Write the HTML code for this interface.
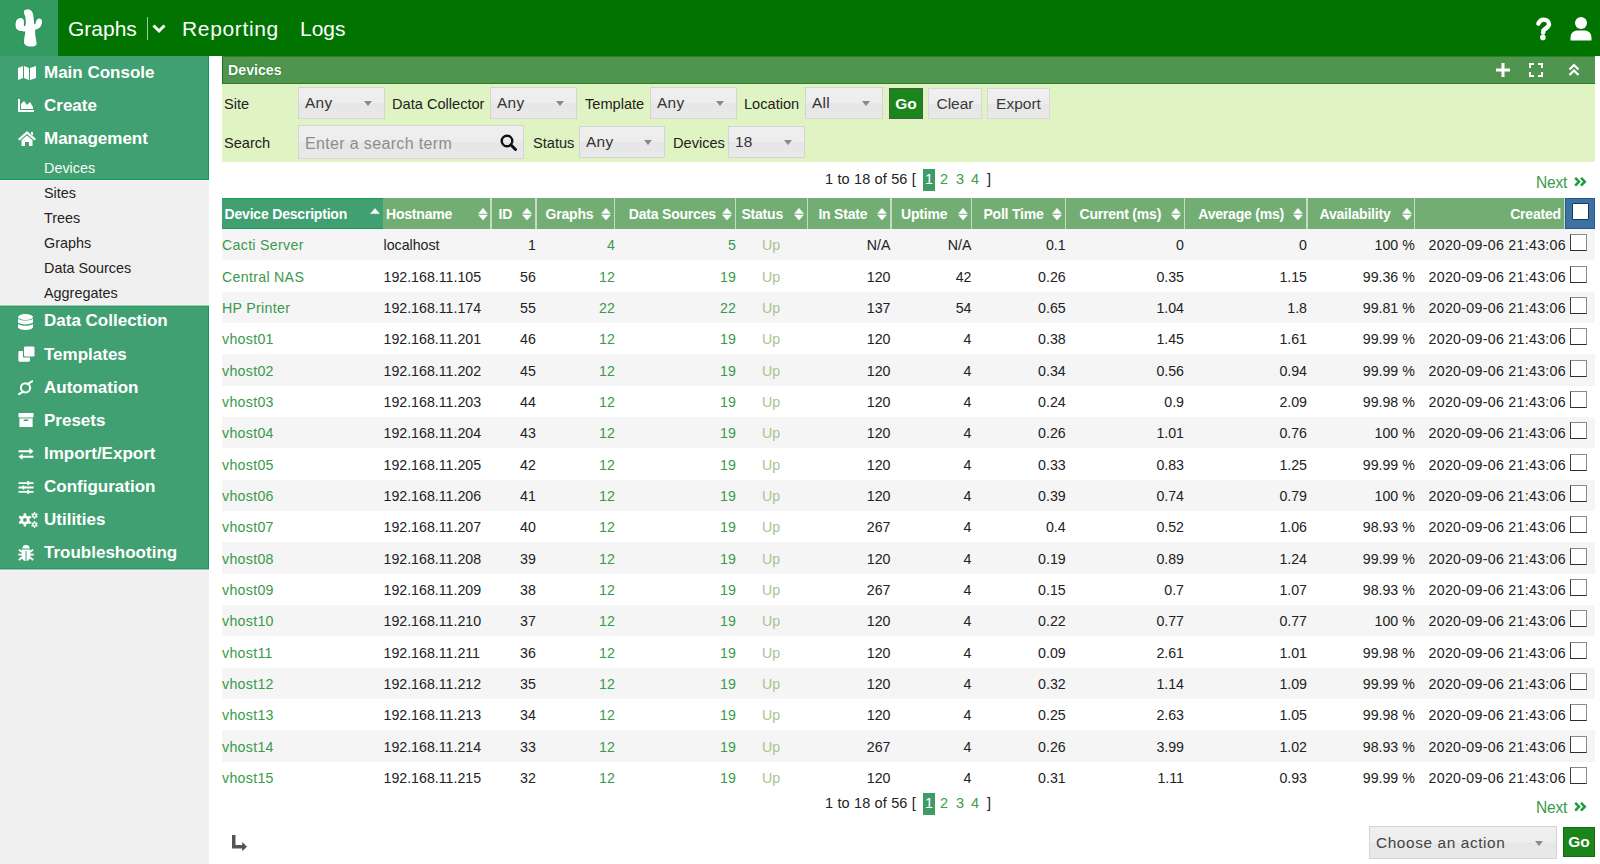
<!DOCTYPE html><html><head><meta charset="utf-8"><title>Devices</title><style>
*{box-sizing:border-box;margin:0;padding:0}
html,body{width:1600px;height:864px;overflow:hidden;background:#fff;font-family:"Liberation Sans",sans-serif;color:#222222}
.a{position:absolute;white-space:nowrap}
#top{left:0;top:0;width:1600px;height:56px;background:#007300}
#logo{left:0;top:0;width:58px;height:56px;background:#339a60}
.nav{color:#fff;font-size:21px;top:16px;line-height:26px}
#side1{left:0;top:56px;width:209px;height:124px;background:#41a072;border-bottom:1px solid #11995a}
#sideg{left:0;top:180px;width:209px;height:684px;background:#f0f0f0}
#side2{left:0;top:305px;width:209px;height:265px;background:#41a072}
.sb{color:#fff;font-weight:bold;font-size:17px;line-height:20px;left:44px}
.ss{font-size:14.4px;line-height:18px;left:44px;color:#262222}
.ic{left:18px}
#hdr{left:222px;top:56px;width:1373px;height:28px;background:#4f954f;border-left:1px solid #127812;border-bottom:1px solid #2b7f2b}
#filt{left:222px;top:84px;width:1373px;height:78px;background:#e0f3c3}
.lbl{font-size:14.6px;line-height:18px;color:#222}
.sel{height:32px;border:1px solid #d3d3d8;background:linear-gradient(#efefef 0,#ededed 50%,#e6e6e6 52%,#e9e9e9 100%);font-size:15.4px;letter-spacing:0.3px;color:#333;line-height:30px;padding-left:6px}
.tri{position:absolute;width:0;height:0;border-left:4.5px solid transparent;border-right:4.5px solid transparent;border-top:5px solid #8a8a8a;top:13px}
.btn{height:31px;border:1px solid #d8d8dc;background:linear-gradient(#f0f0f0 0,#ededed 50%,#e6e6e6 52%,#eaeaea 100%);font-size:15.5px;color:#3a3a3a;line-height:29px;text-align:center}
#th{left:222px;top:198px;width:1373px;height:31px;background:#72ad73}
.thc{color:#fff;font-weight:bold;font-size:14px;letter-spacing:-0.2px;line-height:31px;top:199px}
.sep{top:198px;width:1.6px;height:31px;background:#cbd8c7}
.row{left:222px;width:1373px}
.td{font-size:14.2px;line-height:18px}
.cb{width:17px;height:17px;border:1px solid #8a8a8a;border-bottom-color:#2e2e2e;border-left-color:#3a3a3a;background:#fff}
.lnk{color:#3a9a4c}
.up{color:#a8c38f}
.pg{font-size:14.5px;line-height:20px;letter-spacing:0.15px;padding-bottom:2px}
.pgb{background:#3f9c68;color:#fff;text-align:center}
.pgn{color:#3aa04a}
.next{font-size:15px;color:#3a9a4c;line-height:18px}
</style></head><body>
<div id="top" class="a"></div><div id="logo" class="a"></div>
<svg class="a" style="left:0;top:0" width="58" height="56" viewBox="0 0 58 56"><path fill="#fff" stroke="#12904a" stroke-width="1" paint-order="stroke" d="M23.8 12.5 C23.5 10 26 9 28 9.2 C31 9.4 32.8 11.5 33.3 15 L34.2 23.5 C34.5 24.5 35.2 24.5 35.5 23.5 C36 20 37.5 18.5 39.5 18.6 C41.8 18.8 42.4 21 42 23 C41.5 26.5 39 29 35.2 29.8 C35 33 35.5 37 36.6 42.5 C37 45.5 35 46.6 31.5 46.6 C27 46.6 24.5 45.5 24 42.5 C23.8 39 25 35 25.2 31.5 C21 31.5 17 31 15.8 27.5 C15 24.5 15.6 20.5 17.6 19 C19.5 17.5 22.5 17.8 23.6 19.8 C24.2 21.5 23.8 24 24 25.5 C24.3 26.5 25.5 26 25.6 24.5 C25.8 21 25.8 18 25 16 C24.5 14.5 23.9 13.5 23.8 12.5Z"/></svg>
<div class="a nav" style="left:68px">Graphs</div>
<div class="a" style="left:147px;top:17px;width:1px;height:23px;background:#9fc79f"></div>
<svg class="a" style="left:152px;top:24px" width="14" height="10" viewBox="0 0 14 10"><path d="M1.5 1.5 L7 7 L12.5 1.5" stroke="#fff" stroke-width="3" fill="none"/></svg>
<div class="a nav" style="left:182px;letter-spacing:0.65px">Reporting</div>
<div class="a nav" style="left:300px">Logs</div>
<svg class="a" style="left:1534px;top:16px" width="19" height="26" viewBox="0 0 19 26"><path d="M4.3 7.6 C5.5 5 7.2 3.6 9.6 3.6 C12.9 3.6 15 5.4 15 8.2 C15 11.4 11.2 12.2 9.4 14.6 L9.2 16.6" stroke="#fff" stroke-width="4.4" fill="none" stroke-linecap="round"/><circle cx="8.9" cy="21.4" r="2.8" fill="#fff"/></svg>
<svg class="a" style="left:1570px;top:17px" width="22" height="24" viewBox="0 0 22 24"><circle cx="11" cy="6" r="6" fill="#fff"/><path d="M0.5 21 C0.5 15.5 4 13.6 7.5 13.6 L14.5 13.6 C18 13.6 21.5 15.5 21.5 21 L21.5 23.5 L0.5 23.5Z" fill="#fff"/></svg>
<div id="sideg" class="a"></div><div id="side1" class="a"></div><div id="side2" class="a"></div>
<div class="a" style="left:0;top:180px;width:209px;height:1px;background:#f8f2f5"></div>
<div class="a" style="left:0;top:304px;width:209px;height:1px;background:#f8f2f5"></div>
<div class="a" style="left:0;top:305px;width:209px;height:1px;background:#9ccab0"></div>
<div class="a" style="left:0;top:306px;width:209px;height:1px;background:#2e9c68"></div>
<div class="a" style="left:0;top:568px;width:209px;height:1px;background:#259a64"></div>
<div class="a" style="left:0;top:569px;width:209px;height:1px;background:#9cc8b0"></div>
<div class="a" style="left:0;top:570px;width:209px;height:1px;background:#f8f2f5"></div>
<div class="a" style="left:208px;top:56px;width:1px;height:124px;background:#11995a"></div><div class="a" style="left:208px;top:306px;width:1px;height:263px;background:#11995a"></div>
<div class="a sb" style="top:63px">Main Console</div>
<div class="a sb" style="top:95.6px">Create</div>
<div class="a sb" style="top:129px">Management</div>
<div class="a ss" style="top:159px;color:#f6fbf6">Devices</div>
<div class="a ss" style="top:184px">Sites</div>
<div class="a ss" style="top:209px">Trees</div>
<div class="a ss" style="top:234px">Graphs</div>
<div class="a ss" style="top:259px">Data Sources</div>
<div class="a ss" style="top:284px">Aggregates</div>
<div class="a sb" style="top:311px">Data Collection</div>
<div class="a sb" style="top:345px">Templates</div>
<div class="a sb" style="top:378px">Automation</div>
<div class="a sb" style="top:411px">Presets</div>
<div class="a sb" style="top:444px">Import/Export</div>
<div class="a sb" style="top:477px">Configuration</div>
<div class="a sb" style="top:510px">Utilities</div>
<div class="a sb" style="top:543px">Troubleshooting</div>
<svg class="a" style="left:18px;top:66px" width="18" height="14" viewBox="0 0 18 14"><path fill="#fff" d="M0 2 L5 0 L5 12 L0 14Z M6 0 L11 2 L11 14 L6 12Z M12 2 L18 0 L18 12 L12 14Z"/></svg>
<svg class="a" style="left:18px;top:99px" width="16" height="13" viewBox="0 0 16 13"><path fill="#fff" d="M0 0 H2 V11 H16 V13 H0Z M3 10 V5 L6 2 L9 6 L12 3 L15 8 V10Z"/></svg>
<svg class="a" style="left:18px;top:131px" width="18" height="15" viewBox="0 0 18 15"><path fill="#fff" d="M9 0 L18 8 L16.5 9.5 L9 3 L1.5 9.5 L0 8Z M3.5 9 L9 4.5 L14.5 9 V15 H11 V11 H7 V15 H3.5Z M13 1 H15 V4.5 L13 3Z"/></svg>
<svg class="a" style="left:18px;top:314px" width="15" height="16" viewBox="0 0 15 16"><ellipse cx="7.5" cy="3" rx="7.5" ry="3" fill="#fff"/><path fill="#fff" d="M0 4.8 C2.5 7.2 12.5 7.2 15 4.8 V8.6 C12.5 11 2.5 11 0 8.6Z M0 10 C2.5 12.4 12.5 12.4 15 10 V13 C15 15 11 16 7.5 16 C4 16 0 15 0 13Z"/></svg>
<svg class="a" style="left:18px;top:346px" width="17" height="16" viewBox="0 0 17 16"><rect x="6" y="0.6" width="10.5" height="10" rx="1.4" fill="#fff"/><path fill="#fff" d="M1.5 5 H5 V11.6 H12 V14.6 C12 15.3 11.5 15.8 10.8 15.8 H1.5 C0.8 15.8 0.4 15.3 0.4 14.6 V6.2 C0.4 5.5 0.8 5 1.5 5Z"/></svg>
<svg class="a" style="left:18px;top:380px" width="15" height="15" viewBox="0 0 15 15"><circle cx="7.5" cy="7.8" r="4.6" stroke="#fff" stroke-width="2" fill="none"/><path d="M14.5 1.2 L9.5 4.2 M0.8 14.2 L5.5 11.6" stroke="#fff" stroke-width="2" stroke-linecap="round"/></svg>
<svg class="a" style="left:18px;top:413px" width="16" height="14" viewBox="0 0 16 14"><rect x="0.4" y="0" width="15.2" height="4.4" rx="0.8" fill="#fff"/><rect x="1.4" y="5.4" width="13.2" height="8.6" fill="#fff"/><rect x="5.6" y="6.6" width="4.8" height="1.4" rx="0.6" fill="#41a072"/></svg>
<svg class="a" style="left:18px;top:448px" width="16" height="12" viewBox="0 0 16 12"><path fill="#fff" d="M0.5 2.3 H11.5 V0 L15.5 3.3 L11.5 6.6 V4.3 H0.5Z M15.5 7.7 H4.5 V5.4 L0.5 8.7 L4.5 12 V9.7 H15.5Z"/></svg>
<svg class="a" style="left:18px;top:481px" width="16" height="13" viewBox="0 0 16 13"><path fill="#fff" d="M0.5 1.2 H15.5 V3 H0.5Z M0.5 5.6 H15.5 V7.4 H0.5Z M0.5 10 H15.5 V11.8 H0.5Z M9.4 0 H11.2 V4.2 H9.4Z M4.6 4.4 H6.4 V8.6 H4.6Z M9.4 8.8 H11.2 V13 H9.4Z"/></svg>
<svg class="a" style="left:18px;top:511.5px" width="21" height="17" viewBox="0 0 21 17"><circle cx="6.9" cy="7.9" r="4.6" fill="#fff"/><rect x="5.65" y="1.30" width="2.50" height="3.00" fill="#fff" transform="rotate(0.0 6.9 7.9)"/><rect x="5.65" y="1.30" width="2.50" height="3.00" fill="#fff" transform="rotate(60.0 6.9 7.9)"/><rect x="5.65" y="1.30" width="2.50" height="3.00" fill="#fff" transform="rotate(120.0 6.9 7.9)"/><rect x="5.65" y="1.30" width="2.50" height="3.00" fill="#fff" transform="rotate(180.0 6.9 7.9)"/><rect x="5.65" y="1.30" width="2.50" height="3.00" fill="#fff" transform="rotate(240.0 6.9 7.9)"/><rect x="5.65" y="1.30" width="2.50" height="3.00" fill="#fff" transform="rotate(300.0 6.9 7.9)"/><circle cx="6.9" cy="7.9" r="1.9" fill="#41a072"/><circle cx="16.5" cy="3.5" r="2.3" fill="#fff"/><rect x="15.80" y="0.08" width="1.40" height="1.68" fill="#fff" transform="rotate(0.0 16.5 3.5)"/><rect x="15.80" y="0.08" width="1.40" height="1.68" fill="#fff" transform="rotate(60.0 16.5 3.5)"/><rect x="15.80" y="0.08" width="1.40" height="1.68" fill="#fff" transform="rotate(120.0 16.5 3.5)"/><rect x="15.80" y="0.08" width="1.40" height="1.68" fill="#fff" transform="rotate(180.0 16.5 3.5)"/><rect x="15.80" y="0.08" width="1.40" height="1.68" fill="#fff" transform="rotate(240.0 16.5 3.5)"/><rect x="15.80" y="0.08" width="1.40" height="1.68" fill="#fff" transform="rotate(300.0 16.5 3.5)"/><circle cx="16.5" cy="3.5" r="1.0" fill="#41a072"/><circle cx="16.5" cy="12.5" r="2.3" fill="#fff"/><rect x="15.80" y="9.08" width="1.40" height="1.68" fill="#fff" transform="rotate(0.0 16.5 12.5)"/><rect x="15.80" y="9.08" width="1.40" height="1.68" fill="#fff" transform="rotate(60.0 16.5 12.5)"/><rect x="15.80" y="9.08" width="1.40" height="1.68" fill="#fff" transform="rotate(120.0 16.5 12.5)"/><rect x="15.80" y="9.08" width="1.40" height="1.68" fill="#fff" transform="rotate(180.0 16.5 12.5)"/><rect x="15.80" y="9.08" width="1.40" height="1.68" fill="#fff" transform="rotate(240.0 16.5 12.5)"/><rect x="15.80" y="9.08" width="1.40" height="1.68" fill="#fff" transform="rotate(300.0 16.5 12.5)"/><circle cx="16.5" cy="12.5" r="1.0" fill="#41a072"/></svg>
<svg class="a" style="left:18px;top:545px" width="16" height="16" viewBox="0 0 16 16"><path fill="#fff" d="M4.4 3.4 A3.6 3.4 0 0 1 11.6 3.4Z M3.6 4.4 H12.4 V11 C12.4 14 10.6 16 8 16 C5.4 16 3.6 14 3.6 11Z"/><rect x="7.5" y="6" width="1" height="10" fill="#41a072"/><path d="M0.9 4.6 L3.8 7 M15.1 4.6 L12.2 7 M0.2 9.6 H3.8 M15.8 9.6 H12.2 M0.9 15 L3.9 12.4 M15.1 15 L12.1 12.4" stroke="#fff" stroke-width="1.8"/></svg>
<div id="hdr" class="a"></div>
<div class="a" style="left:222px;top:56px;width:1373px;height:1px;background:#2a832a"></div>
<div class="a" style="left:228px;top:60px;color:#fff;font-weight:bold;font-size:14.2px;line-height:20px;text-shadow:0 0 1.5px #1a6a1a">Devices</div>
<svg class="a" style="left:1496px;top:63px" width="14" height="14" viewBox="0 0 14 14"><path d="M7 0 V14 M0 7 H14" stroke="#fff" stroke-width="3"/></svg>
<svg class="a" style="left:1529px;top:63px" width="14" height="14" viewBox="0 0 14 14"><path d="M1 5 V1 H5 M9 1 H13 V5 M13 9 V13 H9 M5 13 H1 V9" stroke="#fff" stroke-width="2" fill="none"/></svg>
<svg class="a" style="left:1568px;top:63px" width="12" height="14" viewBox="0 0 12 14"><path d="M1.5 6.5 L6 2 L10.5 6.5 M1.5 12 L6 7.5 L10.5 12" stroke="#fff" stroke-width="2.2" fill="none"/></svg>
<div id="filt" class="a"></div>
<div class="a lbl" style="left:224px;top:95px">Site</div>
<div class="a sel" style="left:298px;top:87px;width:87px">Any<span class="tri" style="left:65px"></span></div>
<div class="a lbl" style="left:392px;top:95px">Data Collector</div>
<div class="a sel" style="left:490px;top:87px;width:87px">Any<span class="tri" style="left:65px"></span></div>
<div class="a lbl" style="left:585px;top:95px">Template</div>
<div class="a sel" style="left:650px;top:87px;width:87px">Any<span class="tri" style="left:65px"></span></div>
<div class="a lbl" style="left:744px;top:95px">Location</div>
<div class="a sel" style="left:805px;top:87px;width:78px">All<span class="tri" style="left:56px"></span></div>
<div class="a" style="left:889px;top:88px;width:34px;height:31px;background:#1a861a;border:1px solid #4a5a4a;color:#fff;font-weight:bold;font-size:15.5px;line-height:29px;text-align:center">Go</div>
<div class="a btn" style="left:928px;top:88px;width:54px">Clear</div>
<div class="a btn" style="left:987px;top:88px;width:63px">Export</div>
<div class="a lbl" style="left:224px;top:134px">Search</div>
<div class="a sel" style="left:298px;top:125px;width:226px;height:34px;color:#8d8d8d;line-height:35px;font-size:16px;letter-spacing:0.35px">Enter a search term</div>
<svg class="a" style="left:500px;top:134px" width="17" height="17" viewBox="0 0 17 17"><circle cx="7" cy="7" r="5.3" stroke="#111" stroke-width="2.4" fill="none"/><path d="M10.8 10.8 L15.5 15.5" stroke="#111" stroke-width="3" stroke-linecap="round"/></svg>
<div class="a lbl" style="left:533px;top:134px">Status</div>
<div class="a sel" style="left:579px;top:126px;width:86px">Any<span class="tri" style="left:64px"></span></div>
<div class="a lbl" style="left:673px;top:134px">Devices</div>
<div class="a sel" style="left:728px;top:126px;width:77px">18<span class="tri" style="left:55px"></span></div>
<div class="a pg" style="left:825px;top:169px">1 to 18 of 56 [</div><div class="a pg pgb" style="left:923px;top:169px;width:12px">1</div><div class="a pg pgn" style="left:940px;top:169px">2</div><div class="a pg pgn" style="left:956px;top:169px">3</div><div class="a pg pgn" style="left:971px;top:169px">4</div><div class="a pg" style="left:987px;top:169px">]</div>
<div class="a pg" style="left:825px;top:793px">1 to 18 of 56 [</div><div class="a pg pgb" style="left:923px;top:793px;width:12px">1</div><div class="a pg pgn" style="left:940px;top:793px">2</div><div class="a pg pgn" style="left:956px;top:793px">3</div><div class="a pg pgn" style="left:971px;top:793px">4</div><div class="a pg" style="left:987px;top:793px">]</div>
<div class="a next" style="left:1536px;top:173.5px;font-size:15.6px;letter-spacing:-0.25px">Next</div><svg class="a" style="left:1574px;top:177px" width="13" height="10" viewBox="0 0 13 10"><path d="M1.2 0.8 L5 4.7 L1.2 8.6 M7 0.8 L10.8 4.7 L7 8.6" stroke="#17a03a" stroke-width="2.5" fill="none"/></svg>
<div class="a next" style="left:1536px;top:798.5px;font-size:15.6px;letter-spacing:-0.25px">Next</div><svg class="a" style="left:1574px;top:802px" width="13" height="10" viewBox="0 0 13 10"><path d="M1.2 0.8 L5 4.7 L1.2 8.6 M7 0.8 L10.8 4.7 L7 8.6" stroke="#17a03a" stroke-width="2.5" fill="none"/></svg>
<div id="th" class="a"></div>
<div class="a" style="left:222px;top:198px;width:161px;height:31px;background:#40a072"></div>
<div class="a" style="left:1565px;top:198px;width:30px;height:31px;background:#3e71a0;border:1px solid #1d5d94"></div>
<div class="a sep" style="left:1563.8px"></div>
<div class="a" style="left:1572px;top:203px;width:17px;height:17px;background:#fff;border:1.5px solid #0f3b63;border-radius:1px"></div>
<div class="a sep" style="left:490.0px"></div>
<div class="a sep" style="left:535.3px"></div>
<div class="a sep" style="left:613.6px"></div>
<div class="a sep" style="left:734.8px"></div>
<div class="a sep" style="left:806.5px"></div>
<div class="a sep" style="left:890.1px"></div>
<div class="a sep" style="left:970.5px"></div>
<div class="a sep" style="left:1064.8px"></div>
<div class="a sep" style="left:1183.6px"></div>
<div class="a sep" style="left:1306.0px"></div>
<div class="a sep" style="left:1413.9px"></div>
<div class="a thc" style="left:224.6px">Device Description</div>
<div class="a thc" style="left:386px">Hostname</div>
<svg class="a" style="left:478.1px;top:207.6px" width="10" height="13" viewBox="0 0 10 13"><path d="M5 0.3 L9.4 5.4 L0.6 5.4Z M0.6 7.0 L9.4 7.0 L5 12.1Z" fill="#fff" stroke="#fff" stroke-width="0.5" stroke-linejoin="round"/></svg>
<div class="a thc" style="left:498.6px">ID</div>
<svg class="a" style="left:522.0px;top:207.6px" width="10" height="13" viewBox="0 0 10 13"><path d="M5 0.3 L9.4 5.4 L0.6 5.4Z M0.6 7.0 L9.4 7.0 L5 12.1Z" fill="#fff" stroke="#fff" stroke-width="0.5" stroke-linejoin="round"/></svg>
<div class="a thc" style="left:545.6px">Graphs</div>
<svg class="a" style="left:600.7px;top:207.6px" width="10" height="13" viewBox="0 0 10 13"><path d="M5 0.3 L9.4 5.4 L0.6 5.4Z M0.6 7.0 L9.4 7.0 L5 12.1Z" fill="#fff" stroke="#fff" stroke-width="0.5" stroke-linejoin="round"/></svg>
<div class="a thc" style="left:628.8px">Data Sources</div>
<svg class="a" style="left:722.1px;top:207.6px" width="10" height="13" viewBox="0 0 10 13"><path d="M5 0.3 L9.4 5.4 L0.6 5.4Z M0.6 7.0 L9.4 7.0 L5 12.1Z" fill="#fff" stroke="#fff" stroke-width="0.5" stroke-linejoin="round"/></svg>
<div class="a thc" style="left:741.4px">Status</div>
<svg class="a" style="left:794.3px;top:207.6px" width="10" height="13" viewBox="0 0 10 13"><path d="M5 0.3 L9.4 5.4 L0.6 5.4Z M0.6 7.0 L9.4 7.0 L5 12.1Z" fill="#fff" stroke="#fff" stroke-width="0.5" stroke-linejoin="round"/></svg>
<div class="a thc" style="left:818.4px">In State</div>
<svg class="a" style="left:876.8px;top:207.6px" width="10" height="13" viewBox="0 0 10 13"><path d="M5 0.3 L9.4 5.4 L0.6 5.4Z M0.6 7.0 L9.4 7.0 L5 12.1Z" fill="#fff" stroke="#fff" stroke-width="0.5" stroke-linejoin="round"/></svg>
<div class="a thc" style="left:901px">Uptime</div>
<svg class="a" style="left:957.9px;top:207.6px" width="10" height="13" viewBox="0 0 10 13"><path d="M5 0.3 L9.4 5.4 L0.6 5.4Z M0.6 7.0 L9.4 7.0 L5 12.1Z" fill="#fff" stroke="#fff" stroke-width="0.5" stroke-linejoin="round"/></svg>
<div class="a thc" style="left:983.4px">Poll Time</div>
<svg class="a" style="left:1052.3px;top:207.6px" width="10" height="13" viewBox="0 0 10 13"><path d="M5 0.3 L9.4 5.4 L0.6 5.4Z M0.6 7.0 L9.4 7.0 L5 12.1Z" fill="#fff" stroke="#fff" stroke-width="0.5" stroke-linejoin="round"/></svg>
<div class="a thc" style="left:1079.5px">Current (ms)</div>
<svg class="a" style="left:1170.7px;top:207.6px" width="10" height="13" viewBox="0 0 10 13"><path d="M5 0.3 L9.4 5.4 L0.6 5.4Z M0.6 7.0 L9.4 7.0 L5 12.1Z" fill="#fff" stroke="#fff" stroke-width="0.5" stroke-linejoin="round"/></svg>
<div class="a thc" style="left:1198.3px">Average (ms)</div>
<svg class="a" style="left:1293.3px;top:207.6px" width="10" height="13" viewBox="0 0 10 13"><path d="M5 0.3 L9.4 5.4 L0.6 5.4Z M0.6 7.0 L9.4 7.0 L5 12.1Z" fill="#fff" stroke="#fff" stroke-width="0.5" stroke-linejoin="round"/></svg>
<div class="a thc" style="left:1319.5px">Availability</div>
<svg class="a" style="left:1401.5px;top:207.6px" width="10" height="13" viewBox="0 0 10 13"><path d="M5 0.3 L9.4 5.4 L0.6 5.4Z M0.6 7.0 L9.4 7.0 L5 12.1Z" fill="#fff" stroke="#fff" stroke-width="0.5" stroke-linejoin="round"/></svg>
<div class="a thc" style="left:1510.2px">Created</div>
<svg class="a" style="left:370.0px;top:207.5px" width="10" height="7" viewBox="0 0 10 7"><path d="M5 0.5 L9.4 5.6 L0.6 5.6Z" fill="#fff" stroke="#fff" stroke-width="0.5" stroke-linejoin="round"/></svg>
<div class="a" style="left:222px;top:198px;width:161px;height:1px;background:#16995a"></div><div class="a" style="left:222px;top:228px;width:161px;height:1px;background:#16995a"></div>
<div class="a" style="left:222px;top:229.00px;width:1373px;height:31px;background:#f5f5f5"></div>
<div class="a td lnk" style="left:222px;top:236.30px;letter-spacing:0.3px">Cacti Server</div>
<div class="a td" style="left:383.5px;top:236.30px">localhost</div>
<div class="a td " style="right:1064.2px;top:236.30px;text-align:right">1</div>
<div class="a td lnk" style="right:985.2px;top:236.30px;text-align:right">4</div>
<div class="a td lnk" style="right:864.2px;top:236.30px;text-align:right">5</div>
<div class="a td up" style="left:762px;top:236.30px">Up</div>
<div class="a td " style="right:709.5px;top:236.30px;text-align:right">N/A</div>
<div class="a td " style="right:628.5px;top:236.30px;text-align:right">N/A</div>
<div class="a td " style="right:534.3px;top:236.30px;text-align:right">0.1</div>
<div class="a td " style="right:416px;top:236.30px;text-align:right">0</div>
<div class="a td " style="right:293px;top:236.30px;text-align:right">0</div>
<div class="a td " style="right:185.20000000000005px;top:236.30px;text-align:right">100 %</div>
<div class="a td" style="left:1428.5px;top:236.30px;letter-spacing:0.3px">2020-09-06 21:43:06</div>
<div class="a cb" style="left:1570px;top:234.30px"></div>
<div class="a td lnk" style="left:222px;top:267.63px;letter-spacing:0.3px">Central NAS</div>
<div class="a td" style="left:383.5px;top:267.63px">192.168.11.105</div>
<div class="a td " style="right:1064.2px;top:267.63px;text-align:right">56</div>
<div class="a td lnk" style="right:985.2px;top:267.63px;text-align:right">12</div>
<div class="a td lnk" style="right:864.2px;top:267.63px;text-align:right">19</div>
<div class="a td up" style="left:762px;top:267.63px">Up</div>
<div class="a td " style="right:709.5px;top:267.63px;text-align:right">120</div>
<div class="a td " style="right:628.5px;top:267.63px;text-align:right">42</div>
<div class="a td " style="right:534.3px;top:267.63px;text-align:right">0.26</div>
<div class="a td " style="right:416px;top:267.63px;text-align:right">0.35</div>
<div class="a td " style="right:293px;top:267.63px;text-align:right">1.15</div>
<div class="a td " style="right:185.20000000000005px;top:267.63px;text-align:right">99.36 %</div>
<div class="a td" style="left:1428.5px;top:267.63px;letter-spacing:0.3px">2020-09-06 21:43:06</div>
<div class="a cb" style="left:1570px;top:265.63px"></div>
<div class="a" style="left:222px;top:292.00px;width:1373px;height:31px;background:#f5f5f5"></div>
<div class="a td lnk" style="left:222px;top:298.97px;letter-spacing:0.3px">HP Printer</div>
<div class="a td" style="left:383.5px;top:298.97px">192.168.11.174</div>
<div class="a td " style="right:1064.2px;top:298.97px;text-align:right">55</div>
<div class="a td lnk" style="right:985.2px;top:298.97px;text-align:right">22</div>
<div class="a td lnk" style="right:864.2px;top:298.97px;text-align:right">22</div>
<div class="a td up" style="left:762px;top:298.97px">Up</div>
<div class="a td " style="right:709.5px;top:298.97px;text-align:right">137</div>
<div class="a td " style="right:628.5px;top:298.97px;text-align:right">54</div>
<div class="a td " style="right:534.3px;top:298.97px;text-align:right">0.65</div>
<div class="a td " style="right:416px;top:298.97px;text-align:right">1.04</div>
<div class="a td " style="right:293px;top:298.97px;text-align:right">1.8</div>
<div class="a td " style="right:185.20000000000005px;top:298.97px;text-align:right">99.81 %</div>
<div class="a td" style="left:1428.5px;top:298.97px;letter-spacing:0.3px">2020-09-06 21:43:06</div>
<div class="a cb" style="left:1570px;top:296.97px"></div>
<div class="a td lnk" style="left:222px;top:330.30px;letter-spacing:0.3px">vhost01</div>
<div class="a td" style="left:383.5px;top:330.30px">192.168.11.201</div>
<div class="a td " style="right:1064.2px;top:330.30px;text-align:right">46</div>
<div class="a td lnk" style="right:985.2px;top:330.30px;text-align:right">12</div>
<div class="a td lnk" style="right:864.2px;top:330.30px;text-align:right">19</div>
<div class="a td up" style="left:762px;top:330.30px">Up</div>
<div class="a td " style="right:709.5px;top:330.30px;text-align:right">120</div>
<div class="a td " style="right:628.5px;top:330.30px;text-align:right">4</div>
<div class="a td " style="right:534.3px;top:330.30px;text-align:right">0.38</div>
<div class="a td " style="right:416px;top:330.30px;text-align:right">1.45</div>
<div class="a td " style="right:293px;top:330.30px;text-align:right">1.61</div>
<div class="a td " style="right:185.20000000000005px;top:330.30px;text-align:right">99.99 %</div>
<div class="a td" style="left:1428.5px;top:330.30px;letter-spacing:0.3px">2020-09-06 21:43:06</div>
<div class="a cb" style="left:1570px;top:328.30px"></div>
<div class="a" style="left:222px;top:354.00px;width:1373px;height:32px;background:#f5f5f5"></div>
<div class="a td lnk" style="left:222px;top:361.63px;letter-spacing:0.3px">vhost02</div>
<div class="a td" style="left:383.5px;top:361.63px">192.168.11.202</div>
<div class="a td " style="right:1064.2px;top:361.63px;text-align:right">45</div>
<div class="a td lnk" style="right:985.2px;top:361.63px;text-align:right">12</div>
<div class="a td lnk" style="right:864.2px;top:361.63px;text-align:right">19</div>
<div class="a td up" style="left:762px;top:361.63px">Up</div>
<div class="a td " style="right:709.5px;top:361.63px;text-align:right">120</div>
<div class="a td " style="right:628.5px;top:361.63px;text-align:right">4</div>
<div class="a td " style="right:534.3px;top:361.63px;text-align:right">0.34</div>
<div class="a td " style="right:416px;top:361.63px;text-align:right">0.56</div>
<div class="a td " style="right:293px;top:361.63px;text-align:right">0.94</div>
<div class="a td " style="right:185.20000000000005px;top:361.63px;text-align:right">99.99 %</div>
<div class="a td" style="left:1428.5px;top:361.63px;letter-spacing:0.3px">2020-09-06 21:43:06</div>
<div class="a cb" style="left:1570px;top:359.63px"></div>
<div class="a td lnk" style="left:222px;top:392.97px;letter-spacing:0.3px">vhost03</div>
<div class="a td" style="left:383.5px;top:392.97px">192.168.11.203</div>
<div class="a td " style="right:1064.2px;top:392.97px;text-align:right">44</div>
<div class="a td lnk" style="right:985.2px;top:392.97px;text-align:right">12</div>
<div class="a td lnk" style="right:864.2px;top:392.97px;text-align:right">19</div>
<div class="a td up" style="left:762px;top:392.97px">Up</div>
<div class="a td " style="right:709.5px;top:392.97px;text-align:right">120</div>
<div class="a td " style="right:628.5px;top:392.97px;text-align:right">4</div>
<div class="a td " style="right:534.3px;top:392.97px;text-align:right">0.24</div>
<div class="a td " style="right:416px;top:392.97px;text-align:right">0.9</div>
<div class="a td " style="right:293px;top:392.97px;text-align:right">2.09</div>
<div class="a td " style="right:185.20000000000005px;top:392.97px;text-align:right">99.98 %</div>
<div class="a td" style="left:1428.5px;top:392.97px;letter-spacing:0.3px">2020-09-06 21:43:06</div>
<div class="a cb" style="left:1570px;top:390.97px"></div>
<div class="a" style="left:222px;top:417.00px;width:1373px;height:31px;background:#f5f5f5"></div>
<div class="a td lnk" style="left:222px;top:424.30px;letter-spacing:0.3px">vhost04</div>
<div class="a td" style="left:383.5px;top:424.30px">192.168.11.204</div>
<div class="a td " style="right:1064.2px;top:424.30px;text-align:right">43</div>
<div class="a td lnk" style="right:985.2px;top:424.30px;text-align:right">12</div>
<div class="a td lnk" style="right:864.2px;top:424.30px;text-align:right">19</div>
<div class="a td up" style="left:762px;top:424.30px">Up</div>
<div class="a td " style="right:709.5px;top:424.30px;text-align:right">120</div>
<div class="a td " style="right:628.5px;top:424.30px;text-align:right">4</div>
<div class="a td " style="right:534.3px;top:424.30px;text-align:right">0.26</div>
<div class="a td " style="right:416px;top:424.30px;text-align:right">1.01</div>
<div class="a td " style="right:293px;top:424.30px;text-align:right">0.76</div>
<div class="a td " style="right:185.20000000000005px;top:424.30px;text-align:right">100 %</div>
<div class="a td" style="left:1428.5px;top:424.30px;letter-spacing:0.3px">2020-09-06 21:43:06</div>
<div class="a cb" style="left:1570px;top:422.30px"></div>
<div class="a td lnk" style="left:222px;top:455.63px;letter-spacing:0.3px">vhost05</div>
<div class="a td" style="left:383.5px;top:455.63px">192.168.11.205</div>
<div class="a td " style="right:1064.2px;top:455.63px;text-align:right">42</div>
<div class="a td lnk" style="right:985.2px;top:455.63px;text-align:right">12</div>
<div class="a td lnk" style="right:864.2px;top:455.63px;text-align:right">19</div>
<div class="a td up" style="left:762px;top:455.63px">Up</div>
<div class="a td " style="right:709.5px;top:455.63px;text-align:right">120</div>
<div class="a td " style="right:628.5px;top:455.63px;text-align:right">4</div>
<div class="a td " style="right:534.3px;top:455.63px;text-align:right">0.33</div>
<div class="a td " style="right:416px;top:455.63px;text-align:right">0.83</div>
<div class="a td " style="right:293px;top:455.63px;text-align:right">1.25</div>
<div class="a td " style="right:185.20000000000005px;top:455.63px;text-align:right">99.99 %</div>
<div class="a td" style="left:1428.5px;top:455.63px;letter-spacing:0.3px">2020-09-06 21:43:06</div>
<div class="a cb" style="left:1570px;top:453.63px"></div>
<div class="a" style="left:222px;top:480.00px;width:1373px;height:31px;background:#f5f5f5"></div>
<div class="a td lnk" style="left:222px;top:486.97px;letter-spacing:0.3px">vhost06</div>
<div class="a td" style="left:383.5px;top:486.97px">192.168.11.206</div>
<div class="a td " style="right:1064.2px;top:486.97px;text-align:right">41</div>
<div class="a td lnk" style="right:985.2px;top:486.97px;text-align:right">12</div>
<div class="a td lnk" style="right:864.2px;top:486.97px;text-align:right">19</div>
<div class="a td up" style="left:762px;top:486.97px">Up</div>
<div class="a td " style="right:709.5px;top:486.97px;text-align:right">120</div>
<div class="a td " style="right:628.5px;top:486.97px;text-align:right">4</div>
<div class="a td " style="right:534.3px;top:486.97px;text-align:right">0.39</div>
<div class="a td " style="right:416px;top:486.97px;text-align:right">0.74</div>
<div class="a td " style="right:293px;top:486.97px;text-align:right">0.79</div>
<div class="a td " style="right:185.20000000000005px;top:486.97px;text-align:right">100 %</div>
<div class="a td" style="left:1428.5px;top:486.97px;letter-spacing:0.3px">2020-09-06 21:43:06</div>
<div class="a cb" style="left:1570px;top:484.97px"></div>
<div class="a td lnk" style="left:222px;top:518.30px;letter-spacing:0.3px">vhost07</div>
<div class="a td" style="left:383.5px;top:518.30px">192.168.11.207</div>
<div class="a td " style="right:1064.2px;top:518.30px;text-align:right">40</div>
<div class="a td lnk" style="right:985.2px;top:518.30px;text-align:right">12</div>
<div class="a td lnk" style="right:864.2px;top:518.30px;text-align:right">19</div>
<div class="a td up" style="left:762px;top:518.30px">Up</div>
<div class="a td " style="right:709.5px;top:518.30px;text-align:right">267</div>
<div class="a td " style="right:628.5px;top:518.30px;text-align:right">4</div>
<div class="a td " style="right:534.3px;top:518.30px;text-align:right">0.4</div>
<div class="a td " style="right:416px;top:518.30px;text-align:right">0.52</div>
<div class="a td " style="right:293px;top:518.30px;text-align:right">1.06</div>
<div class="a td " style="right:185.20000000000005px;top:518.30px;text-align:right">98.93 %</div>
<div class="a td" style="left:1428.5px;top:518.30px;letter-spacing:0.3px">2020-09-06 21:43:06</div>
<div class="a cb" style="left:1570px;top:516.30px"></div>
<div class="a" style="left:222px;top:542.00px;width:1373px;height:32px;background:#f5f5f5"></div>
<div class="a td lnk" style="left:222px;top:549.63px;letter-spacing:0.3px">vhost08</div>
<div class="a td" style="left:383.5px;top:549.63px">192.168.11.208</div>
<div class="a td " style="right:1064.2px;top:549.63px;text-align:right">39</div>
<div class="a td lnk" style="right:985.2px;top:549.63px;text-align:right">12</div>
<div class="a td lnk" style="right:864.2px;top:549.63px;text-align:right">19</div>
<div class="a td up" style="left:762px;top:549.63px">Up</div>
<div class="a td " style="right:709.5px;top:549.63px;text-align:right">120</div>
<div class="a td " style="right:628.5px;top:549.63px;text-align:right">4</div>
<div class="a td " style="right:534.3px;top:549.63px;text-align:right">0.19</div>
<div class="a td " style="right:416px;top:549.63px;text-align:right">0.89</div>
<div class="a td " style="right:293px;top:549.63px;text-align:right">1.24</div>
<div class="a td " style="right:185.20000000000005px;top:549.63px;text-align:right">99.99 %</div>
<div class="a td" style="left:1428.5px;top:549.63px;letter-spacing:0.3px">2020-09-06 21:43:06</div>
<div class="a cb" style="left:1570px;top:547.63px"></div>
<div class="a td lnk" style="left:222px;top:580.97px;letter-spacing:0.3px">vhost09</div>
<div class="a td" style="left:383.5px;top:580.97px">192.168.11.209</div>
<div class="a td " style="right:1064.2px;top:580.97px;text-align:right">38</div>
<div class="a td lnk" style="right:985.2px;top:580.97px;text-align:right">12</div>
<div class="a td lnk" style="right:864.2px;top:580.97px;text-align:right">19</div>
<div class="a td up" style="left:762px;top:580.97px">Up</div>
<div class="a td " style="right:709.5px;top:580.97px;text-align:right">267</div>
<div class="a td " style="right:628.5px;top:580.97px;text-align:right">4</div>
<div class="a td " style="right:534.3px;top:580.97px;text-align:right">0.15</div>
<div class="a td " style="right:416px;top:580.97px;text-align:right">0.7</div>
<div class="a td " style="right:293px;top:580.97px;text-align:right">1.07</div>
<div class="a td " style="right:185.20000000000005px;top:580.97px;text-align:right">98.93 %</div>
<div class="a td" style="left:1428.5px;top:580.97px;letter-spacing:0.3px">2020-09-06 21:43:06</div>
<div class="a cb" style="left:1570px;top:578.97px"></div>
<div class="a" style="left:222px;top:605.00px;width:1373px;height:31px;background:#f5f5f5"></div>
<div class="a td lnk" style="left:222px;top:612.30px;letter-spacing:0.3px">vhost10</div>
<div class="a td" style="left:383.5px;top:612.30px">192.168.11.210</div>
<div class="a td " style="right:1064.2px;top:612.30px;text-align:right">37</div>
<div class="a td lnk" style="right:985.2px;top:612.30px;text-align:right">12</div>
<div class="a td lnk" style="right:864.2px;top:612.30px;text-align:right">19</div>
<div class="a td up" style="left:762px;top:612.30px">Up</div>
<div class="a td " style="right:709.5px;top:612.30px;text-align:right">120</div>
<div class="a td " style="right:628.5px;top:612.30px;text-align:right">4</div>
<div class="a td " style="right:534.3px;top:612.30px;text-align:right">0.22</div>
<div class="a td " style="right:416px;top:612.30px;text-align:right">0.77</div>
<div class="a td " style="right:293px;top:612.30px;text-align:right">0.77</div>
<div class="a td " style="right:185.20000000000005px;top:612.30px;text-align:right">100 %</div>
<div class="a td" style="left:1428.5px;top:612.30px;letter-spacing:0.3px">2020-09-06 21:43:06</div>
<div class="a cb" style="left:1570px;top:610.30px"></div>
<div class="a td lnk" style="left:222px;top:643.63px;letter-spacing:0.3px">vhost11</div>
<div class="a td" style="left:383.5px;top:643.63px">192.168.11.211</div>
<div class="a td " style="right:1064.2px;top:643.63px;text-align:right">36</div>
<div class="a td lnk" style="right:985.2px;top:643.63px;text-align:right">12</div>
<div class="a td lnk" style="right:864.2px;top:643.63px;text-align:right">19</div>
<div class="a td up" style="left:762px;top:643.63px">Up</div>
<div class="a td " style="right:709.5px;top:643.63px;text-align:right">120</div>
<div class="a td " style="right:628.5px;top:643.63px;text-align:right">4</div>
<div class="a td " style="right:534.3px;top:643.63px;text-align:right">0.09</div>
<div class="a td " style="right:416px;top:643.63px;text-align:right">2.61</div>
<div class="a td " style="right:293px;top:643.63px;text-align:right">1.01</div>
<div class="a td " style="right:185.20000000000005px;top:643.63px;text-align:right">99.98 %</div>
<div class="a td" style="left:1428.5px;top:643.63px;letter-spacing:0.3px">2020-09-06 21:43:06</div>
<div class="a cb" style="left:1570px;top:641.63px"></div>
<div class="a" style="left:222px;top:668.00px;width:1373px;height:31px;background:#f5f5f5"></div>
<div class="a td lnk" style="left:222px;top:674.97px;letter-spacing:0.3px">vhost12</div>
<div class="a td" style="left:383.5px;top:674.97px">192.168.11.212</div>
<div class="a td " style="right:1064.2px;top:674.97px;text-align:right">35</div>
<div class="a td lnk" style="right:985.2px;top:674.97px;text-align:right">12</div>
<div class="a td lnk" style="right:864.2px;top:674.97px;text-align:right">19</div>
<div class="a td up" style="left:762px;top:674.97px">Up</div>
<div class="a td " style="right:709.5px;top:674.97px;text-align:right">120</div>
<div class="a td " style="right:628.5px;top:674.97px;text-align:right">4</div>
<div class="a td " style="right:534.3px;top:674.97px;text-align:right">0.32</div>
<div class="a td " style="right:416px;top:674.97px;text-align:right">1.14</div>
<div class="a td " style="right:293px;top:674.97px;text-align:right">1.09</div>
<div class="a td " style="right:185.20000000000005px;top:674.97px;text-align:right">99.99 %</div>
<div class="a td" style="left:1428.5px;top:674.97px;letter-spacing:0.3px">2020-09-06 21:43:06</div>
<div class="a cb" style="left:1570px;top:672.97px"></div>
<div class="a td lnk" style="left:222px;top:706.30px;letter-spacing:0.3px">vhost13</div>
<div class="a td" style="left:383.5px;top:706.30px">192.168.11.213</div>
<div class="a td " style="right:1064.2px;top:706.30px;text-align:right">34</div>
<div class="a td lnk" style="right:985.2px;top:706.30px;text-align:right">12</div>
<div class="a td lnk" style="right:864.2px;top:706.30px;text-align:right">19</div>
<div class="a td up" style="left:762px;top:706.30px">Up</div>
<div class="a td " style="right:709.5px;top:706.30px;text-align:right">120</div>
<div class="a td " style="right:628.5px;top:706.30px;text-align:right">4</div>
<div class="a td " style="right:534.3px;top:706.30px;text-align:right">0.25</div>
<div class="a td " style="right:416px;top:706.30px;text-align:right">2.63</div>
<div class="a td " style="right:293px;top:706.30px;text-align:right">1.05</div>
<div class="a td " style="right:185.20000000000005px;top:706.30px;text-align:right">99.98 %</div>
<div class="a td" style="left:1428.5px;top:706.30px;letter-spacing:0.3px">2020-09-06 21:43:06</div>
<div class="a cb" style="left:1570px;top:704.30px"></div>
<div class="a" style="left:222px;top:730.00px;width:1373px;height:32px;background:#f5f5f5"></div>
<div class="a td lnk" style="left:222px;top:737.63px;letter-spacing:0.3px">vhost14</div>
<div class="a td" style="left:383.5px;top:737.63px">192.168.11.214</div>
<div class="a td " style="right:1064.2px;top:737.63px;text-align:right">33</div>
<div class="a td lnk" style="right:985.2px;top:737.63px;text-align:right">12</div>
<div class="a td lnk" style="right:864.2px;top:737.63px;text-align:right">19</div>
<div class="a td up" style="left:762px;top:737.63px">Up</div>
<div class="a td " style="right:709.5px;top:737.63px;text-align:right">267</div>
<div class="a td " style="right:628.5px;top:737.63px;text-align:right">4</div>
<div class="a td " style="right:534.3px;top:737.63px;text-align:right">0.26</div>
<div class="a td " style="right:416px;top:737.63px;text-align:right">3.99</div>
<div class="a td " style="right:293px;top:737.63px;text-align:right">1.02</div>
<div class="a td " style="right:185.20000000000005px;top:737.63px;text-align:right">98.93 %</div>
<div class="a td" style="left:1428.5px;top:737.63px;letter-spacing:0.3px">2020-09-06 21:43:06</div>
<div class="a cb" style="left:1570px;top:735.63px"></div>
<div class="a td lnk" style="left:222px;top:768.97px;letter-spacing:0.3px">vhost15</div>
<div class="a td" style="left:383.5px;top:768.97px">192.168.11.215</div>
<div class="a td " style="right:1064.2px;top:768.97px;text-align:right">32</div>
<div class="a td lnk" style="right:985.2px;top:768.97px;text-align:right">12</div>
<div class="a td lnk" style="right:864.2px;top:768.97px;text-align:right">19</div>
<div class="a td up" style="left:762px;top:768.97px">Up</div>
<div class="a td " style="right:709.5px;top:768.97px;text-align:right">120</div>
<div class="a td " style="right:628.5px;top:768.97px;text-align:right">4</div>
<div class="a td " style="right:534.3px;top:768.97px;text-align:right">0.31</div>
<div class="a td " style="right:416px;top:768.97px;text-align:right">1.11</div>
<div class="a td " style="right:293px;top:768.97px;text-align:right">0.93</div>
<div class="a td " style="right:185.20000000000005px;top:768.97px;text-align:right">99.99 %</div>
<div class="a td" style="left:1428.5px;top:768.97px;letter-spacing:0.3px">2020-09-06 21:43:06</div>
<div class="a cb" style="left:1570px;top:766.97px"></div>
<svg class="a" style="left:231.9px;top:834.8px" width="16" height="17" viewBox="0 0 16 17"><path fill="#555" d="M0 0 H3.5 V9.9 H10.2 V7.1 L15 11.7 L10.2 16.3 V13.5 H0Z"/></svg>
<div class="a sel" style="left:1369px;top:826px;width:188px;height:33px;color:#444;line-height:31px;letter-spacing:0.6px">Choose an action<span class="tri" style="left:165px;top:14px"></span></div>
<div class="a" style="left:1563px;top:827px;width:32px;height:30px;background:#1a861a;border:1px solid #1a6a1a;color:#fff;font-weight:bold;font-size:15.5px;line-height:28px;text-align:center">Go</div>
</body></html>
